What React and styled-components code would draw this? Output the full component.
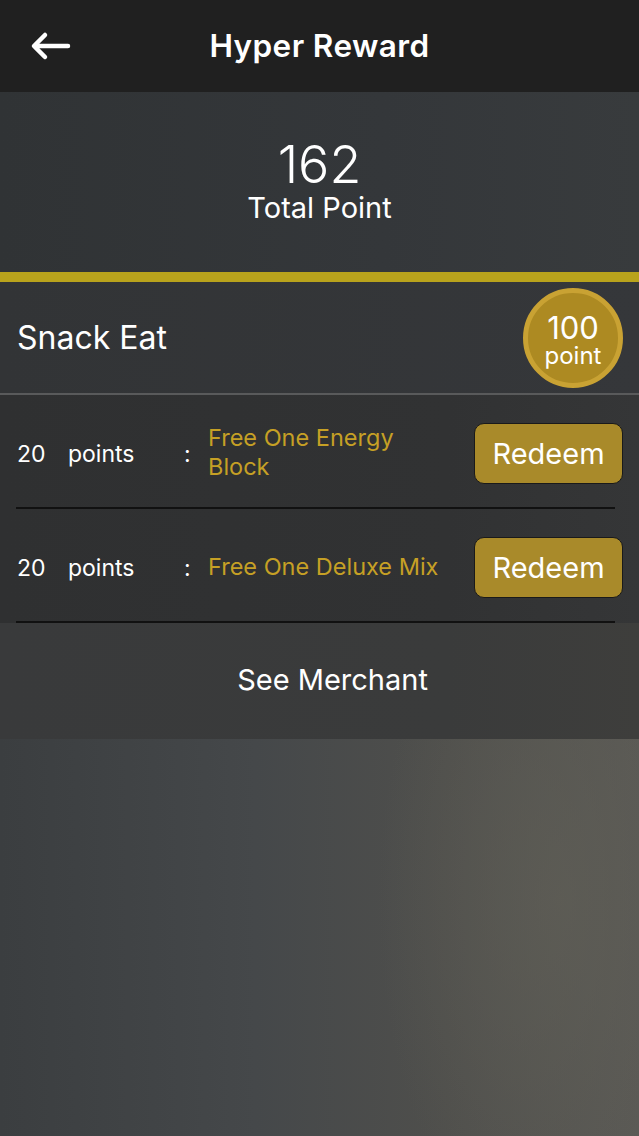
import React from "react";
import styled, { createGlobalStyle } from "styled-components";

const Global = createGlobalStyle`
  html, body { margin: 0; padding: 0; }
  body {
    font-family: "Inter", "Roboto", "Liberation Sans", sans-serif;
    background: #3f4244;
  }
  * { box-sizing: border-box; }
`;

const Screen = styled.div`
  width: 639px;
  min-height: 1136px;
  display: flex;
  flex-direction: column;
  background:
    radial-gradient(ellipse 260px 520px at 560px 900px, rgba(95, 94, 86, 0.7), rgba(95, 94, 86, 0) 70%),
    linear-gradient(90deg, #3b3e40 0%, #45484a 40%, #4f4f4c 70%, #5a5955 100%);
`;

const Header = styled.header`
  height: 92px;
  background: #202020;
  display: grid;
  grid-template-columns: 100px 1fr 100px;
  align-items: center;
`;

const BackButton = styled.button`
  background: none;
  border: 0;
  padding: 0 0 0 30px;
  display: flex;
  align-items: center;
  height: 100%;
  cursor: pointer;
`;

const Title = styled.h1`
  margin: 0;
  text-align: center;
  color: #ffffff;
  font-size: 31.5px;
  font-weight: 600;
  letter-spacing: 0.4px;
  padding-bottom: 2px;
`;

const TotalPanel = styled.section`
  height: 180px;
  background: linear-gradient(90deg, #303335 0%, #34373a 60%, #383b3d 100%);
  display: flex;
  flex-direction: column;
  align-items: center;
  justify-content: center;
  color: #fff;
  padding-bottom: 2px;
`;

const TotalNumber = styled.div`
  font-size: 52px;
  font-weight: 300;
  line-height: 54px;
`;

const TotalLabel = styled.div`
  font-size: 29px;
  font-weight: 400;
  line-height: 32px;
`;

const GoldBar = styled.div`
  height: 10px;
  background: #b9a31c;
`;

const MerchantRow = styled.div`
  height: 113px;
  background: linear-gradient(90deg, #323436 0%, #35373a 100%);
  border-bottom: 2px solid #595a5b;
  display: flex;
  align-items: center;
  justify-content: space-between;
  padding: 0 16px 0 17px;
`;

const MerchantName = styled.div`
  color: #fff;
  font-size: 32px;
  font-weight: 400;
`;

const Badge = styled.div`
  width: 100px;
  height: 100px;
  border-radius: 50%;
  background: #ad8a22;
  border: 5px solid #c9a233;
  display: flex;
  flex-direction: column;
  align-items: center;
  justify-content: center;
  color: #fff;
  padding-top: 5px;
`;

const BadgeNumber = styled.span`
  font-size: 31px;
  line-height: 30px;
  font-weight: 400;
`;

const BadgeLabel = styled.span`
  font-size: 24px;
  line-height: 25px;
  font-weight: 400;
`;

const ItemList = styled.div`
  background: linear-gradient(90deg, #2f3031 0%, #313233 70%, #353637 100%);
  display: flex;
  flex-direction: column;
`;

const ItemRow = styled.div`
  height: 114px;
  margin: 0 24px 0 16px;
  border-bottom: 2px solid #111111;
  display: flex;
  align-items: center;
`;

const Points = styled.span`
  color: #fff;
  font-size: 23px;
  width: 52px;
  padding: 5px 0 0 1px;
`;

const PointsUnit = styled.span`
  color: #fff;
  font-size: 23px;
  width: 116px;
  padding-top: 5px;
`;

const Colon = styled.span`
  color: #fff;
  font-size: 23px;
  width: 24px;
  padding-top: 5px;
`;

const RewardCell = styled.div`
  flex: 1;
  padding-top: 2px;
`;

const Reward = styled.span`
  display: block;
  max-width: 240px;
  color: #c6a025;
  font-size: 23.5px;
  line-height: 29px;
`;

const RedeemButton = styled.button`
  width: 149px;
  height: 61px;
  margin-right: -8px;
  margin-top: 4px;
  border-radius: 10px;
  background: #a98a2a;
  border: 1.5px solid #1a1a1a;
  color: #fff;
  font-family: inherit;
  font-size: 29px;
  font-weight: 400;
  cursor: pointer;
`;

const SeeMerchant = styled.button`
  height: 116px;
  border: 0;
  background: linear-gradient(90deg, #393a3b 0%, #3a3b3b 70%, #3e3e3c 100%);
  color: #fff;
  font-family: inherit;
  font-size: 29px;
  font-weight: 400;
  padding: 0 0 4px 26px;
  cursor: pointer;
`;

const BackArrow = () => (
  <svg width="42" height="30" viewBox="0 0 42 30" fill="none">
    <path
      d="M38 15H5M15 4L4 15l11 11"
      stroke="#fff"
      strokeWidth="4.5"
      strokeLinecap="round"
      strokeLinejoin="round"
    />
  </svg>
);

const items = [
  { points: 20, reward: "Free One Energy Block" },
  { points: 20, reward: "Free One Deluxe Mix" },
];

export default function App() {
  return (
    <>
      <Global />
      <Screen>
        <Header>
          <BackButton aria-label="Back">
            <BackArrow />
          </BackButton>
          <Title>Hyper Reward</Title>
          <span />
        </Header>
        <TotalPanel>
          <TotalNumber>162</TotalNumber>
          <TotalLabel>Total Point</TotalLabel>
        </TotalPanel>
        <GoldBar />
        <MerchantRow>
          <MerchantName>Snack Eat</MerchantName>
          <Badge>
            <BadgeNumber>100</BadgeNumber>
            <BadgeLabel>point</BadgeLabel>
          </Badge>
        </MerchantRow>
        <ItemList>
          {items.map((it, i) => (
            <ItemRow key={i}>
              <Points>{it.points}</Points>
              <PointsUnit>points</PointsUnit>
              <Colon>:</Colon>
              <RewardCell>
                <Reward>{it.reward}</Reward>
              </RewardCell>
              <RedeemButton>Redeem</RedeemButton>
            </ItemRow>
          ))}
        </ItemList>
        <SeeMerchant>See Merchant</SeeMerchant>
      </Screen>
    </>
  );
}
